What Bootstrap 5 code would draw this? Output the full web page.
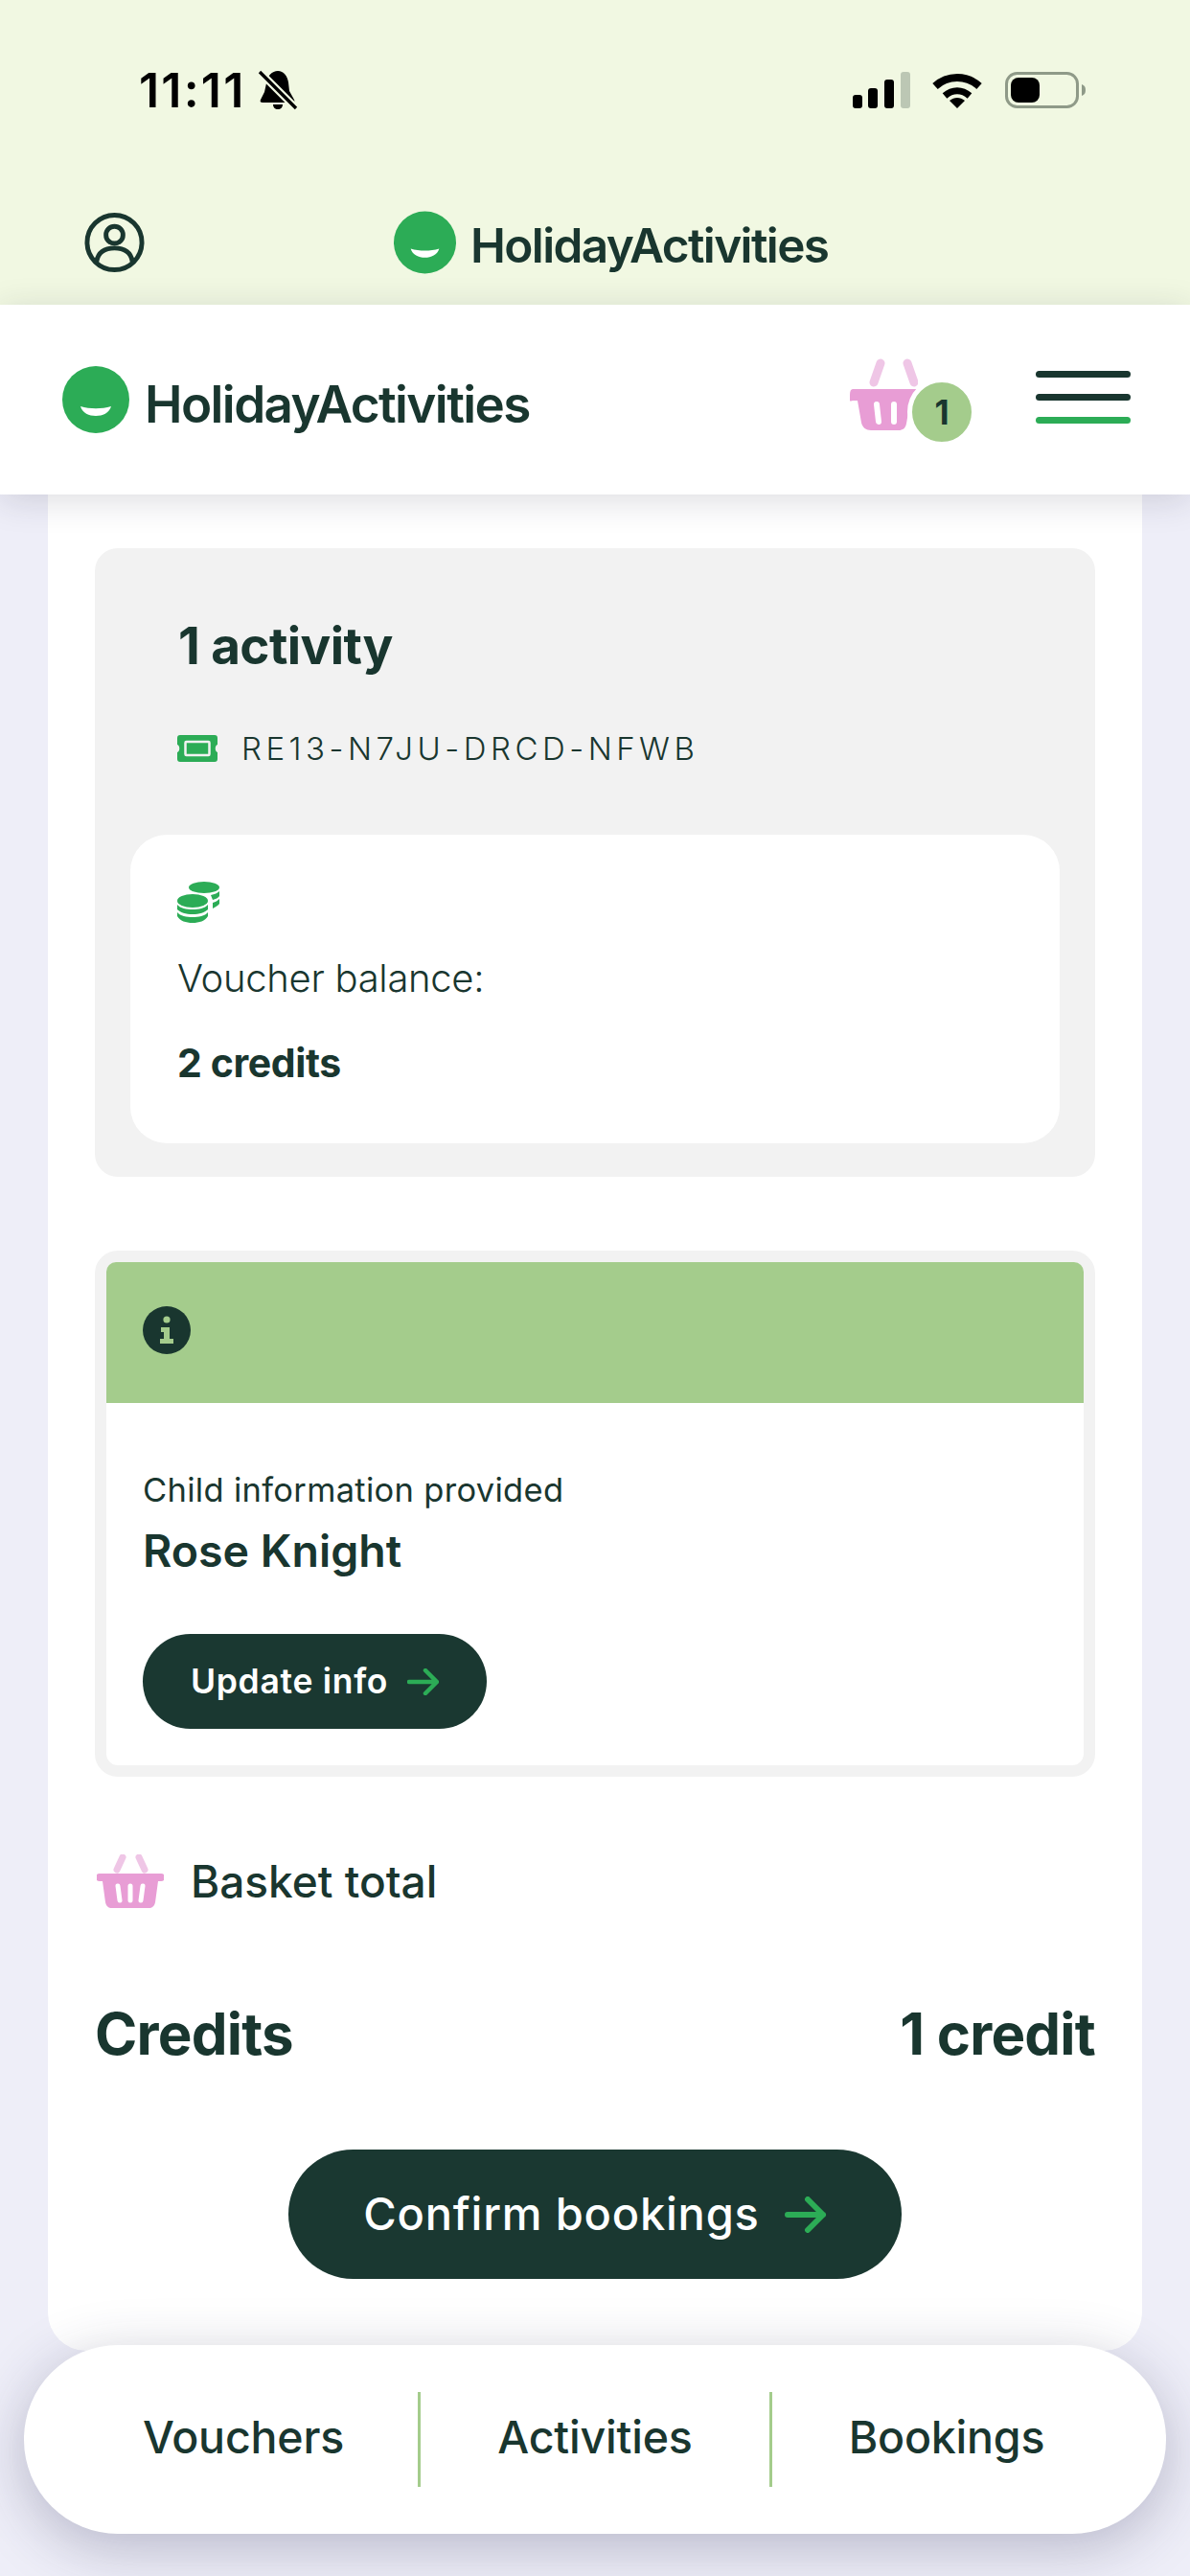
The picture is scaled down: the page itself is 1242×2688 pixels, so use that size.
<!DOCTYPE html>
<html lang="en"><head><meta charset="utf-8"><title>Holiday Activities</title>
<link rel="stylesheet" href="https://cdn.jsdelivr.net/npm/bootstrap@5.3.0/dist/css/bootstrap.min.css">
<style>
html,body{margin:0;height:2688px;overflow:hidden}
body{background:#eeeef8;font-family:Inter,"Liberation Sans",sans-serif;color:#19362f;position:relative}
.topzone{height:318px;background:#f1f8e2;padding-top:75px}
.statusrow{height:38px;padding:0 109px 0 145px;color:#000}
.clock{font:600 50px/38px Inter,sans-serif;letter-spacing:2.2px;color:#000}
.bellgap{margin-left:11px}
.logorow{margin-top:107px;padding-left:88px}
.logorow .brandlink{margin-left:260px}
.brandtxt{font-weight:600;color:#19362f;letter-spacing:-1.6px;white-space:nowrap}
.brandtxt.big{font-size:53px;line-height:60px;margin-left:16px;padding-top:10px}
.brandtxt.mid{font-size:49.5px;line-height:56px;margin-left:15px;padding-top:5px}
.headbar{height:198px;background:#fff;padding:0 62px 0 65px;position:relative;z-index:3;box-shadow:0 6px 34px rgba(40,40,60,.16)}
.basketwrap{width:71px;height:76px;margin-top:-10px;margin-right:123px;position:relative}
.countdot{position:absolute;left:60px;top:20px;width:72px;height:72px;border:5px solid #fff;background:#a4cc8c;border-radius:50%;font:700 35px/62px Inter,sans-serif;text-align:center;color:#19362f}
.burger{width:99px;margin-top:-5px}
.burger i{display:block;height:7px;border-radius:4px;background:#19362f;margin-bottom:17px}
.burger i:last-child{background:#2cac56;margin-bottom:0}
.mainsheet{margin:0 50px;height:1937px;background:#fff;border-radius:0 0 40px 40px;padding:56px 49px 0}
.greybox{height:656px;background:#f2f2f2;border-radius:24px;padding:69px 37px 0}
.greytitle{font-size:53px;line-height:67px;font-weight:700;margin:0 0 0 50px;letter-spacing:-.6px}
.coderow{height:40px;margin:53px 0 70px 49px}
.codetxt{font-size:33px;line-height:40px;font-weight:300;letter-spacing:4.5px;margin-left:25px;white-space:nowrap}
.balancebox{height:322px;background:#fff;border-radius:38px;padding:49px 49px 0;}
.balancebox svg{display:block}
.ballabel{font-size:40px;line-height:48px;font-weight:300;margin-top:34px;letter-spacing:-.3px}
.balvalue{font-size:41px;line-height:48px;font-weight:700;margin-top:40px;letter-spacing:-.4px}
.infopanel{margin-top:77px;border:12px solid #f2f2f2;border-radius:24px;height:549px;background:#fff}
.infohead{height:147px;background:#a4cc8c;border-radius:10px 10px 0 0;padding:0 0 6px 38px}
.infobody{padding:71px 38px 0}
.infolabel{font-size:34.5px;line-height:40px;font-weight:400;letter-spacing:.3px}
.infoname{font-size:46.5px;line-height:56px;font-weight:600;margin-top:15px}
.darkbtn{background:#1a3831;color:#fff;border:0;border-radius:999px;display:inline-flex;align-items:center;justify-content:center;padding:0}
.darkbtn:hover{background:#1a3831;color:#fff}
.darkbtn.small1{width:359px;height:99px;margin-top:59px;font-size:35.5px;font-weight:600;letter-spacing:.7px;gap:20px}
.darkbtn.large1{width:640px;height:135px;margin-top:85px;font-size:47px;font-weight:500;letter-spacing:.8px;gap:26px}
.baskettotal{margin-top:81px;height:56px;font-size:46px;font-weight:500;gap:28px;padding-left:2px}
.creditrow{margin-top:95px;font-size:60px;line-height:72px;font-weight:700;letter-spacing:-.8px}
.bottombar{position:absolute;left:25px;top:2447px;width:1192px;height:197px;background:#fff;border-radius:98px;padding:0 47px;z-index:4;box-shadow:0 14px 60px rgba(40,40,80,.28)}
.bottombar a{flex:1 1 0;height:99px;display:flex;align-items:center;justify-content:center;color:#19362f;text-decoration:none;font-size:46.5px;font-weight:500;letter-spacing:-.2px;padding-bottom:3px}
.bottombar a+a{border-left:3px solid #a4cc8c}
.gapwifi{margin-left:23px}
.gapbatt{margin-left:24px}
</style></head>
<body>
<div class="topzone">
  <div class="statusrow d-flex justify-content-between align-items-center">
    <div class="d-flex align-items-center">
      <span class="clock">11:11</span>
      <svg class="bellgap" width="44" height="44" viewBox="0 0 44 44"><path d="M22 2c6 0 10 5 11 12l1 9 5 9c1 2 0 3-2 3H6c-2 0-3-1-2-3l4-8 2-9C11 7 16 2 22 2z" fill="#000"/><path d="M17 37h10c0 3-2 5-5 5s-5-2-5-5z" fill="#000"/><path d="M3 3l38 38" stroke="#f1f8e2" stroke-width="8"/><path d="M3 3l38 38" stroke="#000" stroke-width="3.4"/></svg>
    </div>
    <div class="d-flex align-items-center">
      <svg width="60" height="38" viewBox="0 0 60 38"><rect x="0" y="24" width="10" height="14" rx="3"/><rect x="16" y="17" width="10" height="21" rx="3"/><rect x="33" y="8" width="10" height="30" rx="3"/><rect x="50" y="0" width="10" height="38" rx="3" fill="#bcc7b4"/></svg>
      <svg class="gapwifi" width="52" height="38" viewBox="0 0 52 38"><path d="M3 15C16 3 36 3 49 15" fill="none" stroke="#000" stroke-width="8"/><path d="M13 25c8-7 18-7 26 0" fill="none" stroke="#000" stroke-width="7"/><path d="M18 30c5-4 11-4 16 0l-8 8z"/></svg>
      <svg class="gapbatt" width="84" height="38" viewBox="0 0 84 38"><rect x="1.5" y="1.5" width="74" height="35" rx="11" fill="none" stroke="#8f9a88" stroke-width="3"/><rect x="6" y="6" width="30" height="26" rx="8"/><path d="M80 13c3 1 4 3 4 6s-1 5-4 6z" fill="#8f9a88"/></svg>
    </div>
  </div>
  <div class="logorow d-flex align-items-center">
    <svg width="63" height="64" viewBox="0 0 64 64"><g fill="none" stroke="#19362f" stroke-width="5"><circle cx="32" cy="32" r="29"/><circle cx="32" cy="24" r="9"/><path d="M13 52c2-11 10-14 19-14s17 3 19 14"/></g></svg>
    <a class="brandlink d-flex align-items-center text-decoration-none" href="#">
      <svg width="65" height="66" viewBox="0 0 70 70"><circle cx="35" cy="35" r="35" fill="#2cac56"/><path d="M19 42c10 3 22 3 32 0-2 7-9 10-16 10s-14-3-16-10z" fill="#fff"/></svg>
      <span class="brandtxt mid">HolidayActivities</span>
    </a>
  </div>
</div>
<nav class="headbar d-flex align-items-center justify-content-between">
  <a class="d-flex align-items-center text-decoration-none" href="#">
    <svg width="70" height="70" viewBox="0 0 70 70"><circle cx="35" cy="35" r="35" fill="#2cac56"/><path d="M19 42c10 3 22 3 32 0-2 7-9 10-16 10s-14-3-16-10z" fill="#fff"/></svg>
    <span class="brandtxt big">HolidayActivities</span>
  </a>
  <div class="d-flex align-items-center">
    <div class="basketwrap">
      <svg width="71" height="76" viewBox="0 0 71 76"><path d="M32 5l-7 20M60 5l7 20" stroke="#efc6e6" stroke-width="9" stroke-linecap="round"/><path d="M3 32h65a3 3 0 0 1 0 12h-5l-4 24c-1 5-4 7-8 7H22c-5 0-9-3-10-8L8 44H3a3 3 0 0 1-3-6c0-4 1-6 3-6z" fill="#e89dd5"/><path d="M28 48l2 18M46 48v18" stroke="#fff" stroke-width="6" stroke-linecap="round"/></svg>
      <span class="countdot">1</span>
    </div>
    <div class="burger"><i></i><i></i><i></i></div>
  </div>
</nav>
<main class="mainsheet">
  <section class="greybox">
    <h1 class="greytitle">1 activity</h1>
    <div class="coderow d-flex align-items-center">
      <svg width="42" height="28" viewBox="0 0 42 28"><path d="M3 0h36a3 3 0 0 1 3 3v7c-3 1-3 7 0 8v7a3 3 0 0 1-3 3H3a3 3 0 0 1-3-3v-7c3-1 3-7 0-8V3a3 3 0 0 1 3-3z" fill="#2cac56"/><rect x="8.5" y="7" width="25" height="14" rx="1" fill="#2cac56" stroke="#f2f2f2" stroke-width="2.5"/></svg>
      <span class="codetxt">RE13-N7JU-DRCD-NFWB</span>
    </div>
    <div class="balancebox">
      <svg width="44" height="43" viewBox="0 0 44 43"><g fill="#2cac56"><ellipse cx="28" cy="6" rx="16" ry="6"/><path d="M35 14c4-1 7-2 9-4v5c-1 2-4 3-7 4zM37 22c3-1 5-2 7-4v5c-1 2-4 3-7 5z"/><ellipse cx="16" cy="20" rx="16" ry="7"/><path d="M0 24c3 4 10 5 16 5s13-1 16-5v5c-3 3-9 5-16 5S3 32 0 29zM0 32c3 4 10 5 16 5s13-1 16-5v4c-3 5-9 7-16 7S3 41 0 36z"/></g></svg>
      <div class="ballabel">Voucher balance:</div>
      <div class="balvalue">2 credits</div>
    </div>
  </section>
  <section class="infopanel">
    <div class="infohead d-flex align-items-center">
      <svg width="50" height="50" viewBox="0 0 50 50"><circle cx="25" cy="25" r="25" fill="#19362f"/><circle cx="25" cy="14" r="3.6" fill="#a4cc8c"/><path d="M19 22h9v12h4v5H18v-5h4v-7h-3z" fill="#a4cc8c"/></svg>
    </div>
    <div class="infobody">
      <div class="infolabel">Child information provided</div>
      <div class="infoname">Rose Knight</div>
      <a class="btn darkbtn small1" href="#">Update info
        <svg width="33" height="28" viewBox="0 0 33 28"><path d="M2 14h28M19 2l12 12-12 12" fill="none" stroke="#2cac56" stroke-width="4.5" stroke-linecap="round" stroke-linejoin="round"/></svg>
      </a>
    </div>
  </section>
  <div class="baskettotal d-flex align-items-center">
    <svg width="70" height="56" viewBox="0 0 70 56"><path d="M27 3l-6 13M44 3l6 13" stroke="#efc6e6" stroke-width="7" stroke-linecap="round"/><path d="M3 20h64a3 3 0 0 1 0 8h-3l-3 22c-1 4-3 6-7 6H16c-4 0-6-2-7-6L6 28H3a3 3 0 0 1 0-8z" fill="#e89dd5"/><path d="M22 33l2 15M35 33v15M48 33l-2 15" stroke="#fff" stroke-width="5" stroke-linecap="round"/></svg>
    <span>Basket total</span>
  </div>
  <div class="creditrow d-flex justify-content-between"><span>Credits</span><span>1 credit</span></div>
  <div class="text-center">
    <a class="btn darkbtn large1" href="#">Confirm bookings
      <svg width="44" height="38" viewBox="0 0 44 38"><path d="M3 19h37M24 3l16 16-16 16" fill="none" stroke="#2cac56" stroke-width="6" stroke-linecap="round" stroke-linejoin="round"/></svg>
    </a>
  </div>
</main>
<nav class="bottombar d-flex align-items-center">
  <a href="#">Vouchers</a><a href="#">Activities</a><a href="#">Bookings</a>
</nav>
<script src="https://cdn.jsdelivr.net/npm/bootstrap@5.3.0/dist/js/bootstrap.bundle.min.js"></script>
</body></html>
